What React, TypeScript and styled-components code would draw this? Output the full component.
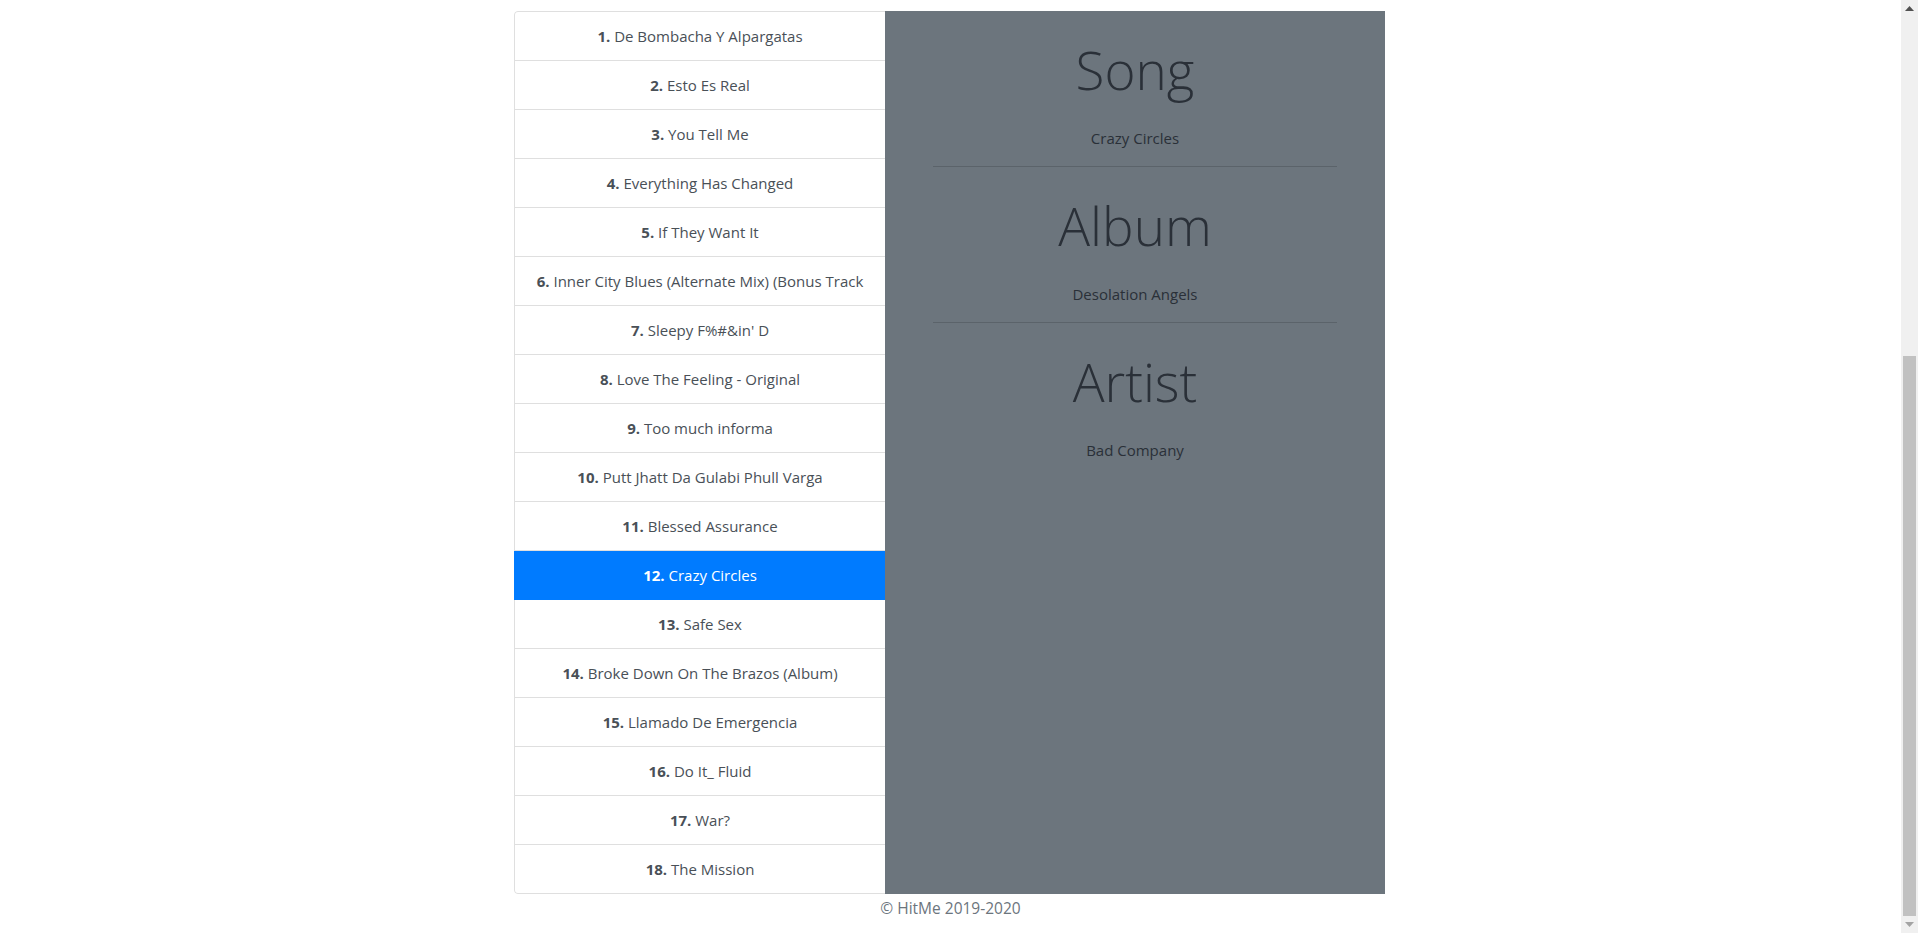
import React from "react";
import styled, { createGlobalStyle } from "styled-components";

const GlobalStyle = createGlobalStyle`
  body {
    margin: 0;
    font-family: "Open Sans", "Noto Sans", "Liberation Sans", sans-serif;
    font-size: 16px;
    line-height: 24px;
    color: #212529;
    background: #fff;
    overflow: hidden;
  }
  * { box-sizing: border-box; }
`;

const Window = styled.div`
  display: flex;
  height: 100vh;
`;

const Page = styled.div`
  flex: 1;
  padding-top: 11px;
`;

const ScrollTrack = styled.div`
  width: 17px;
  height: 100vh;
  background: #f0f0f0;
  display: flex;
  flex-direction: column;
  align-items: center;
  justify-content: space-between;
`;

const ScrollArrow = styled.div`
  height: 17px;
  width: 17px;
  display: flex;
  align-items: center;
  justify-content: center;
`;

const ScrollThumb = styled.div`
  width: 13px;
  height: 560px;
  margin-top: auto;
  background: #c1c1c1;
`;

const Layout = styled.main`
  width: 871px;
  margin: 0 auto;
  transform: translateX(-1px);
  display: grid;
  grid-template-columns: 371px 500px;
  align-items: stretch;
`;

const TrackList = styled.ul`
  list-style: none;
  margin: 0;
  padding: 0;
  display: flex;
  flex-direction: column;
  border-radius: 4px 0 0 4px;
  overflow: hidden;
`;

const TrackItem = styled.li<{ $active?: boolean }>`
  padding: 12px 20px;
  text-align: center;
  white-space: nowrap;
  overflow: hidden;
  font-size: 15px;
  line-height: 24px;
  color: ${(p) => (p.$active ? "#fff" : "#495057")};
  background: ${(p) => (p.$active ? "#007bff" : "#fff")};
  border: 1px solid ${(p) => (p.$active ? "#007bff" : "rgba(0,0,0,.125)")};
  border-right: none;
  & + & { border-top: none; }
  &:first-child { border-top-left-radius: 4px; }
  &:last-child { border-bottom-left-radius: 4px; }
`;

const TrackNumber = styled.b`
  font-weight: 700;
`;

const InfoPanel = styled.section`
  background: #6c757d;
  padding: 24px 48px 0;
  text-align: center;
`;

const InfoHeading = styled.h2`
  margin: 0;
  font-size: 53px;
  line-height: 69px;
  font-weight: 300;
  color: #2a3038;
`;

const InfoValue = styled.p`
  margin: 22px 0 16px;
  font-size: 15px;
  line-height: 24px;
  color: #2a3038;
`;

const Divider = styled.hr`
  margin: 0 0 24px;
  border: 0;
  border-top: 1px solid rgba(0, 0, 0, 0.15);
`;

const Footer = styled.footer`
  padding-top: 2px;
  text-align: center;
  color: #6c757d;
  font-size: 15.5px;
  line-height: 24px;
`;

const tracks = [
  "De Bombacha Y Alpargatas",
  "Esto Es Real",
  "You Tell Me",
  "Everything Has Changed",
  "If They Want It",
  "Inner City Blues (Alternate Mix) (Bonus Track",
  "Sleepy F%#&in' D",
  "Love The Feeling - Original",
  "Too much informa",
  "Putt Jhatt Da Gulabi Phull Varga",
  "Blessed Assurance",
  "Crazy Circles",
  "Safe Sex",
  "Broke Down On The Brazos (Album)",
  "Llamado De Emergencia",
  "Do It_ Fluid",
  "War?",
  "The Mission",
];

const info = [
  { label: "Song", value: "Crazy Circles" },
  { label: "Album", value: "Desolation Angels" },
  { label: "Artist", value: "Bad Company" },
];

const Arrow = ({ up, color }: { up?: boolean; color: string }) => (
  <svg width="9" height="5" viewBox="0 0 9 5">
    <path d={up ? "M0 5 L4.5 0 L9 5 Z" : "M0 0 L4.5 5 L9 0 Z"} fill={color} />
  </svg>
);

export default function App() {
  return (
    <>
      <GlobalStyle />
      <Window>
        <Page>
          <Layout>
            <TrackList>
              {tracks.map((t, i) => (
                <TrackItem key={i} $active={i === 11}>
                  <TrackNumber>{i + 1}.</TrackNumber> {t}
                </TrackItem>
              ))}
            </TrackList>
            <InfoPanel>
              {info.map((s, i) => (
                <div key={s.label}>
                  <InfoHeading>{s.label}</InfoHeading>
                  <InfoValue>{s.value}</InfoValue>
                  {i < info.length - 1 && <Divider />}
                </div>
              ))}
            </InfoPanel>
          </Layout>
          <Footer>© HitMe 2019-2020</Footer>
        </Page>
        <ScrollTrack>
          <ScrollArrow>
            <Arrow up color="#505050" />
          </ScrollArrow>
          <ScrollThumb />
          <ScrollArrow>
            <Arrow color="#a3a3a3" />
          </ScrollArrow>
        </ScrollTrack>
      </Window>
    </>
  );
}
